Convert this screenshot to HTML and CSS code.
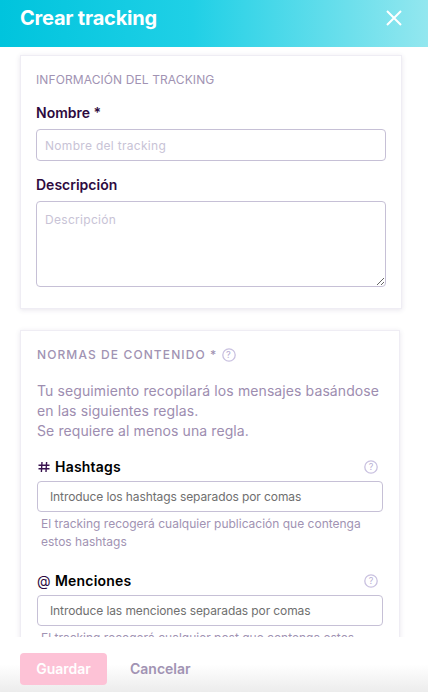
FILE: index.html
```html
<!DOCTYPE html>
<html lang="es">
<head>
    <meta charset="UTF-8">
    <meta name="viewport" content="width=device-width, initial-scale=1.0">
    <title>Crear tracking</title>
    <link rel="stylesheet" href="styles.css">
</head>
<body>
    <div class="drawer">
        <header class="drawer-header">
            <h1>Crear tracking</h1>
            <button class="close" aria-label="Cerrar">
                <svg width="16" height="16" viewBox="0 0 16 16"><path d="M1 1L15 15M15 1L1 15" stroke="#fff" stroke-width="2" fill="none"/></svg>
            </button>
        </header>

        <div class="drawer-body">
            <section class="card card-info">
                <h2 class="card-title">INFORMACIÓN DEL TRACKING</h2>
                <label class="field-label" for="nombre">Nombre *</label>
                <input class="input" type="text" id="nombre" placeholder="Nombre del tracking">
                <label class="field-label label-desc" for="descripcion">Descripción</label>
                <textarea class="input textarea" id="descripcion" placeholder="Descripción"></textarea>
            </section>

            <section class="card card-rules">
                <h2 class="rules-title">NORMAS DE CONTENIDO *
                    <svg class="help" width="14" height="14" viewBox="0 0 14 14"><circle cx="7" cy="7" r="6.2"/><text x="7" y="10.2" text-anchor="middle">?</text></svg>
                </h2>
                <p class="rules-intro">Tu seguimiento recopilará los mensajes basándose en las siguientes reglas.<br>Se requiere al menos una regla.</p>

                <div class="rule">
                    <div class="rule-head">
                        <svg class="rule-icon" width="12" height="12" viewBox="0 0 12 12"><path d="M4 1L3.4 11M8.6 1L8 11M0.5 4.2H11.5M0.5 7.8H11.5" stroke="#3a1450" stroke-width="1.4" fill="none"/></svg>
                        <span class="rule-name">Hashtags</span>
                        <svg class="help" width="14" height="14" viewBox="0 0 14 14"><circle cx="7" cy="7" r="6.2"/><text x="7" y="10.2" text-anchor="middle">?</text></svg>
                    </div>
                    <input class="rule-input" type="text" placeholder="Introduce los hashtags separados por comas">
                    <p class="rule-hint">El tracking recogerá cualquier publicación que contenga estos hashtags</p>
                </div>

                <div class="rule">
                    <div class="rule-head">
                        <span class="rule-at">@</span>
                        <span class="rule-name">Menciones</span>
                        <svg class="help" width="14" height="14" viewBox="0 0 14 14"><circle cx="7" cy="7" r="6.2"/><text x="7" y="10.2" text-anchor="middle">?</text></svg>
                    </div>
                    <input class="rule-input" type="text" placeholder="Introduce las menciones separadas por comas">
                    <p class="rule-hint">El tracking recogerá cualquier post que contenga estos menciones</p>
                </div>
            </section>
        </div>

        <footer class="drawer-footer">
            <button class="btn-save">Guardar</button>
            <button class="btn-cancel">Cancelar</button>
        </footer>
    </div>
</body>
</html>
```

FILE: styles.css
```css
* {
    box-sizing: border-box;
}
body {
    margin: 0;
    font-family: Inter, "Noto Sans", sans-serif;
    background-color: #fff;
}
.drawer {
    display: flex;
    flex-direction: column;
    width: 428px;
    height: 692px;
    overflow: hidden;
}
.drawer-header {
    flex: none;
    display: flex;
    justify-content: space-between;
    align-items: center;
    height: 47px;
    padding: 0 26px 0 20px;
    background: linear-gradient(90deg, #00c4dd 0%, #20d0e6 45%, #93e7ef 100%);
}
.drawer-header h1 {
    margin: 0 0 11px;
    font-size: 20px;
    line-height: 24px;
    font-weight: 700;
    letter-spacing: -0.2px;
    color: #fff;
}
.close {
    display: flex;
    padding: 0;
    margin-bottom: 11px;
    border: 0;
    background: none;
}
.drawer-body {
    flex: 1;
    min-height: 0;
    overflow: hidden;
    padding: 8px 26px 0 20px;
}
.card {
    background-color: #fff;
    border: 1px solid #efedf4;
    box-shadow: 0 1px 5px rgba(60, 40, 100, 0.12);
}
.card-info {
    height: 254px;
    padding: 16px 15px 0;
}
.card-rules {
    margin-top: 21px;
    margin-right: 2px;
    padding: 16px 16px 0;
}
.card-title {
    margin: 0;
    font-size: 12px;
    line-height: 16px;
    font-weight: 400;
    letter-spacing: 0.1px;
    color: #a193b3;
}
.field-label {
    display: block;
    margin: 16px 0 8px;
    font-size: 14px;
    line-height: 17px;
    font-weight: 600;
    color: #2e0a40;
}
.label-desc {
    margin-top: 15px;
}
.input {
    display: block;
    width: 100%;
    height: 32px;
    padding: 0 8px;
    border: 1px solid #c6c0d6;
    border-radius: 4px;
    font-family: inherit;
    font-size: 12px;
    letter-spacing: 0.3px;
    background-color: #fff;
}
.input::placeholder {
    color: #c8c3d6;
}
.textarea {
    height: 86px;
    padding: 10px 8px;
}
.rules-title {
    display: flex;
    align-items: center;
    gap: 5px;
    margin: 0;
    font-size: 12px;
    line-height: 16px;
    font-weight: 500;
    letter-spacing: 1.1px;
    color: #a193b3;
}
.help {
    flex: none;
}
.help circle {
    fill: none;
    stroke: #c9c1e0;
    stroke-width: 1.3;
}
.help text {
    font-family: Inter, sans-serif;
    font-size: 9px;
    fill: #b9afd4;
}
.rules-intro {
    margin: 18px 0 0;
    font-size: 14px;
    line-height: 20px;
    letter-spacing: 0.1px;
    color: #9d8db0;
}
.rule {
    margin-top: 16px;
}
.rule-head {
    display: flex;
    align-items: center;
    height: 18px;
}
.rule-icon {
    flex: none;
    margin: 1px 5px 0 1px;
}
.rule-at {
    width: 18px;
    font-size: 14px;
    color: #2e0a40;
}
.rule-name {
    flex: 1;
    font-size: 14px;
    font-weight: 600;
    letter-spacing: 0.2px;
    color: #000;
}
.rule-head .help {
    margin: 2px 5px 0 0;
}
.rule-input {
    display: block;
    width: 100%;
    height: 31px;
    margin-top: 6px;
    padding: 0 12px;
    border: 1px solid #c6c0d6;
    border-radius: 4px;
    font-family: inherit;
    font-size: 12px;
    letter-spacing: -0.1px;
}
.rule-input::placeholder {
    color: #6f6f6f;
}
.rule-hint {
    margin: 3px 0 0 4px;
    font-size: 12px;
    line-height: 18px;
    color: #a193b3;
}
.rule + .rule {
    margin-top: 20px;
}
.drawer-footer {
    flex: none;
    display: flex;
    align-items: center;
    gap: 23px;
    height: 55px;
    padding: 8px 20px 0;
    background: linear-gradient(180deg, #fff 50%, #ececec 100%);
}
.btn-save {
    width: 87px;
    height: 32px;
    border: 0;
    border-radius: 4px;
    font-family: inherit;
    font-size: 14px;
    font-weight: 600;
    color: #fff;
    background-color: #fdc2d6;
}
.btn-cancel {
    padding: 0;
    border: 0;
    background: none;
    font-family: inherit;
    font-size: 14px;
    font-weight: 600;
    color: #a193b3;
}
```
